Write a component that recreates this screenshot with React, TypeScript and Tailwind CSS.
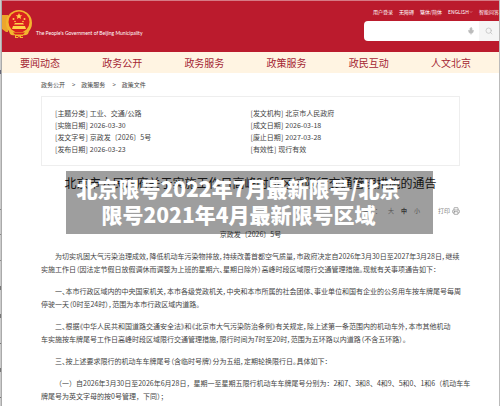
import { ChevronDown, Mic, Printer, Search } from 'lucide-react';

const topLinks = ['用户登录', '无障碍', '繁体/简体'];

const navItems = ['要闻动态', '政务公开', '政务服务', '政策服务', '政民互动', '人文北京'];

const crumbs = ['政务公开', '政策服务', '政策文件'];

const meta = [
  ['主题分类', '工业、交通/公路'],
  ['发文机构', '北京市人民政府'],
  ['实施日期', '2026-03-30'],
  ['成文日期', '2026-03-18'],
  ['发文字号', '京政发〔2026〕5号'],
  ['废止日期', '2027-03-28'],
  ['发布日期', '2026-03-23'],
  ['有效性', '现行有效'],
];

const paragraphs = [
  [
    '为切实巩固大气污染治理成效，降低机动车污染物排放，持续改善首都空气质量，市政府决定自2026年3月30日至2027年3月28日，继续',
    '实施工作日（因法定节假日放假调休而调整为上班的星期六、星期日除外）高峰时段区域限行交通管理措施。现就有关事项通告如下：',
  ],
  [
    '一、本市行政区域内的中央国家机关，本市各级党政机关，中央和本市所属的社会团体、事业单位和国有企业的公务用车按车牌尾号每周',
    '停驶一天（0时至24时），范围为本市行政区域内道路。',
  ],
  [
    '二、根据《中华人民共和国道路交通安全法》和《北京市大气污染防治条例》有关规定，除上述第一条范围内的机动车外，本市其他机动',
    '车实施按车牌尾号工作日高峰时段区域限行交通管理措施，限行时间为7时至20时，范围为五环路以内道路（不含五环路）。',
  ],
  ['三、按上述要求限行的机动车车牌尾号（含临时号牌）分为五组，定期轮换限行日。具体如下：'],
];

const items = [
  [
    '（一）自2026年3月30日至2026年6月28日，星期一至星期五限行机动车车牌尾号分别为：2和7、3和8、4和9、5和0、1和6（机动车车',
    '牌尾号为英文字母的按0号管理，下同）；',
  ],
];

function Emblem() {
  return (
    <svg viewBox="0 0 32 32" className="h-8 w-8 shrink-0" aria-hidden="true">
      <path d="M0 7h6v17H4L0 21z" fill="#eda52c" />
      <circle cx="17" cy="15" r="13" fill="#f3b52f" />
      <circle cx="17" cy="14" r="10.500" fill="#d9201f" />
      <path d="M17 5l1 2.200 2.300.1-1.800 1.500.6 2.200-2.100-1.200-2.100 1.200.6-2.200-1.800-1.500 2.300-.1z" fill="#ffd34a" />
      <circle cx="11.500" cy="11" r="1" fill="#ffd34a" />
      <circle cx="22.500" cy="11" r="1" fill="#ffd34a" />
      <circle cx="13" cy="13.500" r=".8" fill="#ffd34a" />
      <circle cx="21" cy="13.500" r=".8" fill="#ffd34a" />
      <path d="M13 15h8l1 1.500H12zM11 18h12l1 3H10z" fill="#ffd34a" />
      <path d="M7 23q4 3 7 1h6q3 2 7-1l-1 3q-3 2-5 1v3h-3l-1-2-1 2h-3v-3q-3 1-5-1z" fill="#f3b52f" />
      <path d="M11 24.500h12l-2 2h-8zM14 28h2v1h-2zM19 28h2v1h-2z" fill="#d9201f" />
    </svg>
  );
}

function Header() {
  return (
    <header className="flex h-[52px] justify-between border-t border-[#d67a85] bg-[#bb1b2d] text-white">
      <div className="flex items-start pt-[7px]">
        <Emblem />
        <span className="ml-[2px] pt-5 font-['Lato',sans-serif] text-[5px] leading-[10px]">
          The People's Government of Beijing Municipality
        </span>
      </div>
      <div className="w-[135px] pt-[7px]">
        <div className="flex justify-between pl-[9px] text-[5px] leading-[8px] whitespace-nowrap">
          {topLinks.map((link) => (
            <a key={link} href="#">{link}</a>
          ))}
          <a href="#" className="flex items-center">
            ENGLISH
            <ChevronDown size={4} />
          </a>
          <a href="#">智能问答</a>
        </div>
        <form className="mt-[5px] flex h-5 items-center overflow-hidden rounded-l-sm bg-white">
          <input aria-label="搜索" className="h-full min-w-0 flex-1 px-1 text-[7px] text-[#333] outline-none" />
          <button type="button" aria-label="语音" className="px-1 text-[#bbb]">
            <Mic size={8} fill="currentColor" />
          </button>
          <button type="button" aria-label="查询" className="flex h-full w-5 items-center justify-center bg-[#f5f5f5] text-[#bbb]">
            <Search size={8} />
          </button>
        </form>
      </div>
    </header>
  );
}

function Nav() {
  return (
    <nav className="flex h-[21px] items-center justify-between bg-[#fff4e2] pr-[28px] pl-[18px] text-[10px] text-[#a42634]">
      {navItems.map((item) => (
        <a key={item} href="#">{item}</a>
      ))}
    </nav>
  );
}

function Paragraph({ lines }: { lines: string[] }) {
  return (
    <p className="indent-[14px]">
      {lines.map((line, index) => (
        <span key={line}>
          {index > 0 && <br />}
          {line}
        </span>
      ))}
    </p>
  );
}

function Banner() {
  return (
    <div className="absolute top-[171px] right-[67px] left-[66px] bg-black/38 pt-[4px] pr-[22px] pb-[7px] text-center text-[21px] leading-[26px] font-black whitespace-nowrap text-white">
      <h1>
        北京限号2022年7月最新限号/北京
        <br />
        限号2021年4月最新限号区域
      </h1>
    </div>
  );
}

export default function App() {
  return (
    <div className="relative flex overflow-hidden bg-white font-['Noto_Sans_CJK_SC',sans-serif] text-[#444]">
      <div className="flex w-[2px] shrink-0 flex-col justify-between border-r border-[#aaa] bg-[#ccc] pt-[70px] pb-2">
        <span className="h-1 bg-[#667]" />
        <span className="mt-[110px] h-px bg-[#888]" />
        <span className="h-px bg-[#888]" />
        <span className="h-px bg-[#888]" />
        <span className="h-1 bg-[#777]" />
        <span className="h-1 bg-[#777]" />
        <span className="h-px bg-[#777]" />
        <span className="h-1 bg-[#777]" />
        <span className="h-px bg-[#777]" />
      </div>
      <div className="min-w-0 flex-1 pb-[3px]">
        <Header />
        <Nav />
        <main className="pr-[39px] pl-[39px]">
          <div className="flex gap-[7px] pt-[7px] text-[6px] leading-[10px]">
            {crumbs.map((crumb, index) => (
              <span key={crumb} className="flex gap-[6px]">
                {index > 0 && <span>&gt;</span>}
                <a href="#">{crumb}</a>
              </span>
            ))}
          </div>
          <dl className="mt-[6px] grid grid-cols-2 border border-[#eee] px-[13px] py-[10px] text-[7px] leading-[12px]">
            {meta.map(([label, value]) => (
              <div key={label} className="flex gap-[2px]">
                <dt>[{label}]</dt>
                <dd>{value}</dd>
              </div>
            ))}
          </dl>
          <h2 className="mt-[7px] flex justify-center text-[12px] leading-[20px] whitespace-nowrap text-[#222]">
            北京市人民政府关于实施工作日高峰时段区域限行交通管理措施的通告
          </h2>
          <div className="mt-[12px] flex items-center justify-end gap-[7px] text-[6px] leading-[12px] text-[#888]">
            <span>字号：</span>
            <button type="button">大</button>
            <button type="button" className="font-bold text-[#555]">中</button>
            <button type="button">小</button>
            <button type="button" className="ml-[11px] flex items-center gap-[2px]">
              打印
              <Printer size={8} />
            </button>
          </div>
          <p className="mt-[11px] text-center text-[7px] leading-[12px]">京政发〔2026〕5号</p>
          <article className="mt-[10px] flex flex-col gap-[9px] text-[7px] leading-[13px] whitespace-nowrap">
            <div className="flex flex-col gap-[9px] [font-feature-settings:'palt']">
              {paragraphs.map((lines) => (
                <Paragraph key={lines[0]} lines={lines} />
              ))}
            </div>
            {items.map((lines) => (
              <Paragraph key={lines[0]} lines={lines} />
            ))}
          </article>
        </main>
      </div>
      <div className="w-px shrink-0 bg-[#bbb]" />
      <Banner />
    </div>
  );
}
